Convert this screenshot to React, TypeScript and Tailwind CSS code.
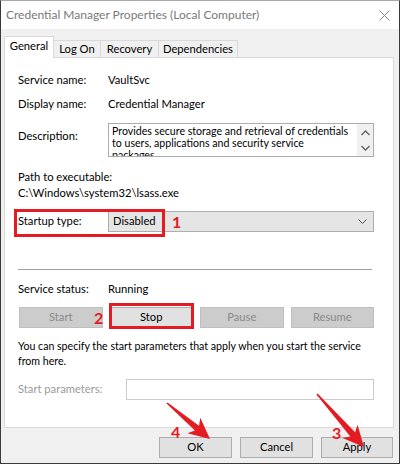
import React from "react";

const RED = "#e31b23";

const arrowPoints = (tx: number, ty: number, px: number, py: number) => {
  const dx = px - tx;
  const dy = py - ty;
  const len = Math.hypot(dx, dy);
  const ux = dx / len;
  const uy = dy / len;
  const nx = -uy;
  const ny = ux;
  const bx = px - ux * 17;
  const by = py - uy * 17;
  const pts = [
    [tx - nx * 0.8, ty - ny * 0.8],
    [tx + nx * 0.8, ty + ny * 0.8],
    [bx + nx * 3.2, by + ny * 3.2],
    [bx - ux * 4 + nx * 10, by - uy * 4 + ny * 10],
    [px, py],
    [bx - ux * 4 - nx * 10, by - uy * 4 - ny * 10],
    [bx - nx * 3.2, by - ny * 3.2],
  ];
  return pts.map((p) => p.join(",")).join(" ");
};

const Btn = ({ label, disabled, className = "" }: { label: string; disabled?: boolean; className?: string }) => (
  <div
    className={`h-[21px] flex items-center justify-center border ${
      disabled ? "bg-[#cccccc] border-[#bfbfbf] text-[#8a8a8a]" : "bg-[#e1e1e1] border-[#adadad] text-black"
    } ${className}`}
  >
    {label}
  </div>
);

const Row = ({ label, value, className = "" }: { label: string; value: string; className?: string }) => (
  <div className={`flex items-center h-[16px] ${className}`}>
    <span className="w-[90px]">{label}</span>
    <span>{value}</span>
  </div>
);

const Tab = ({ label, w }: { label: string; w: string }) => (
  <div className={`h-[17px] ${w} border border-b-0 border-l-0 border-[#d9d9d9] flex items-center justify-center`}>
    {label}
  </div>
);

export default function App() {
  return (
    <div
      className="relative w-[400px] h-[464px] bg-[#f0f0f0] border-x border-b border-[#3a3a3a] border-t border-t-[#aaaaaa] text-[11.2px] text-black overflow-hidden"
      style={{ fontFamily: 'Lato, "Noto Sans", sans-serif' }}
    >
      {/* title bar */}
      <div className="h-[28px] bg-white flex items-center justify-between pl-[5px] pr-[9px]">
        <span className="text-[#7a7a7a] text-[12px]">Credential Manager Properties (Local Computer)</span>
        <svg width="11" height="11" viewBox="0 0 11 11" stroke="#8a8a8a" strokeWidth="1">
          <path d="M0.5 0.5 L10.5 10.5 M10.5 0.5 L0.5 10.5" />
        </svg>
      </div>

      {/* tabs */}
      <div className="flex items-end h-[28px] pl-[3px] pt-[6px]">
        <div className="h-[22px] w-[50px] -mb-px z-10 relative bg-white border border-b-0 border-[#d9d9d9] flex items-center justify-center pb-[3px]">
          General
        </div>
        <Tab label="Log On" w="w-[47px]" />
        <Tab label="Recovery" w="w-[58px]" />
        <Tab label="Dependencies" w="w-[79px]" />
      </div>

      {/* panel */}
      <div className="mx-[3px] w-[390px] h-[371px] bg-white border border-[#d9d9d9] pl-[13px] pr-[19px] pt-[14px]">
        <Row label="Service name:" value="VaultSvc" />
        <Row label="Display name:" value="Credential Manager" className="mt-[8px]" />

        <div className="flex mt-[11px]">
          <span className="w-[90px] pt-[5px]">Description:</span>
          <div className="flex-1 h-[34px] border border-[#abadb3] flex overflow-hidden">
            <div className="flex-1 pl-[3px] pt-[1px] text-[10.6px] leading-[12px] overflow-hidden">
              Provides secure storage and retrieval of credentials to users, applications and security service
              <br />
              packages
            </div>
            <div className="w-[16px] bg-[#f0f0f0] flex flex-col items-center pt-[6px] gap-[9px]">
              <svg width="9" height="6" viewBox="0 0 9 6" fill="none" stroke="#606060" strokeWidth="1.3">
                <path d="M0.5 5 L4.5 1 L8.5 5" />
              </svg>
              <svg width="9" height="6" viewBox="0 0 9 6" fill="none" stroke="#606060" strokeWidth="1.3">
                <path d="M0.5 1 L4.5 5 L8.5 1" />
              </svg>
            </div>
          </div>
        </div>

        <div className="h-[16px] flex items-center mt-[12px]">Path to executable:</div>
        <div className="h-[16px] flex items-center">C:\Windows\system32\lsass.exe</div>

        <div className="flex items-center mt-[10px]">
          <span className="w-[90px]">Startup type:</span>
          <div className="flex-1 h-[21px] bg-[#e5e5e5] border border-[#adadad] flex items-center justify-between pl-[4px] pr-[6px]">
            <span>Disabled</span>
            <svg width="9" height="5" viewBox="0 0 9 5" fill="none" stroke="#505050" strokeWidth="1">
              <path d="M0.5 0.5 L4.5 4.5 L8.5 0.5" />
            </svg>
          </div>
        </div>

        <div className="h-px bg-[#a0a0a0] mt-[37px] mr-[2px]" />

        <Row label="Service status:" value="Running" className="mt-[11px]" />

        <div className="grid grid-cols-4 gap-[7px] mt-[10px] pl-[1px]">
          <Btn label="Start" disabled />
          <Btn label="Stop" />
          <Btn label="Pause" disabled />
          <Btn label="Resume" disabled />
        </div>

        <p className="mt-[11px] mr-[-12px] text-[10.6px] leading-[15px]">
          You can specify the start parameters that apply when you start the service
          <br />
          from here.
        </p>

        <div className="flex items-center mt-[10px]">
          <span className="w-[108px] text-[#9a9a9a]">Start parameters:</span>
          <div className="flex-1 h-[21px] bg-white border border-[#cccccc]" />
        </div>
      </div>

      {/* dialog buttons */}
      <div className="flex justify-end gap-[8px] mt-[9px] pr-[6px]">
        <Btn label="OK" className="w-[73px]" />
        <Btn label="Cancel" className="w-[73px]" />
        <Btn label="Apply" className="w-[72px]" />
      </div>

      {/* annotations */}
      <div className="absolute left-[13px] top-[208px] w-[151px] h-[28px] border-[3px] border-[#e31b23]" />
      <div className="absolute left-[108px] top-[302px] w-[85px] h-[26px] border-[3px] border-[#e31b23]" />
      <span className="absolute left-[171px] top-[211px] text-[16px] font-bold leading-[20px]" style={{ color: RED }}>1</span>
      <span className="absolute left-[93px] top-[307px] text-[16px] font-bold leading-[20px]" style={{ color: RED }}>2</span>
      <span className="absolute left-[331px] top-[422px] text-[16px] font-bold leading-[20px]" style={{ color: RED }}>3</span>
      <span className="absolute left-[170px] top-[421px] text-[16px] font-bold leading-[20px]" style={{ color: RED }}>4</span>
      <svg className="absolute left-0 top-0 pointer-events-none" width="400" height="464">
        <polygon points={arrowPoints(166, 402, 209, 438)} fill={RED} />
        <polygon points={arrowPoints(316, 393, 363, 446)} fill={RED} />
      </svg>
    </div>
  );
}
